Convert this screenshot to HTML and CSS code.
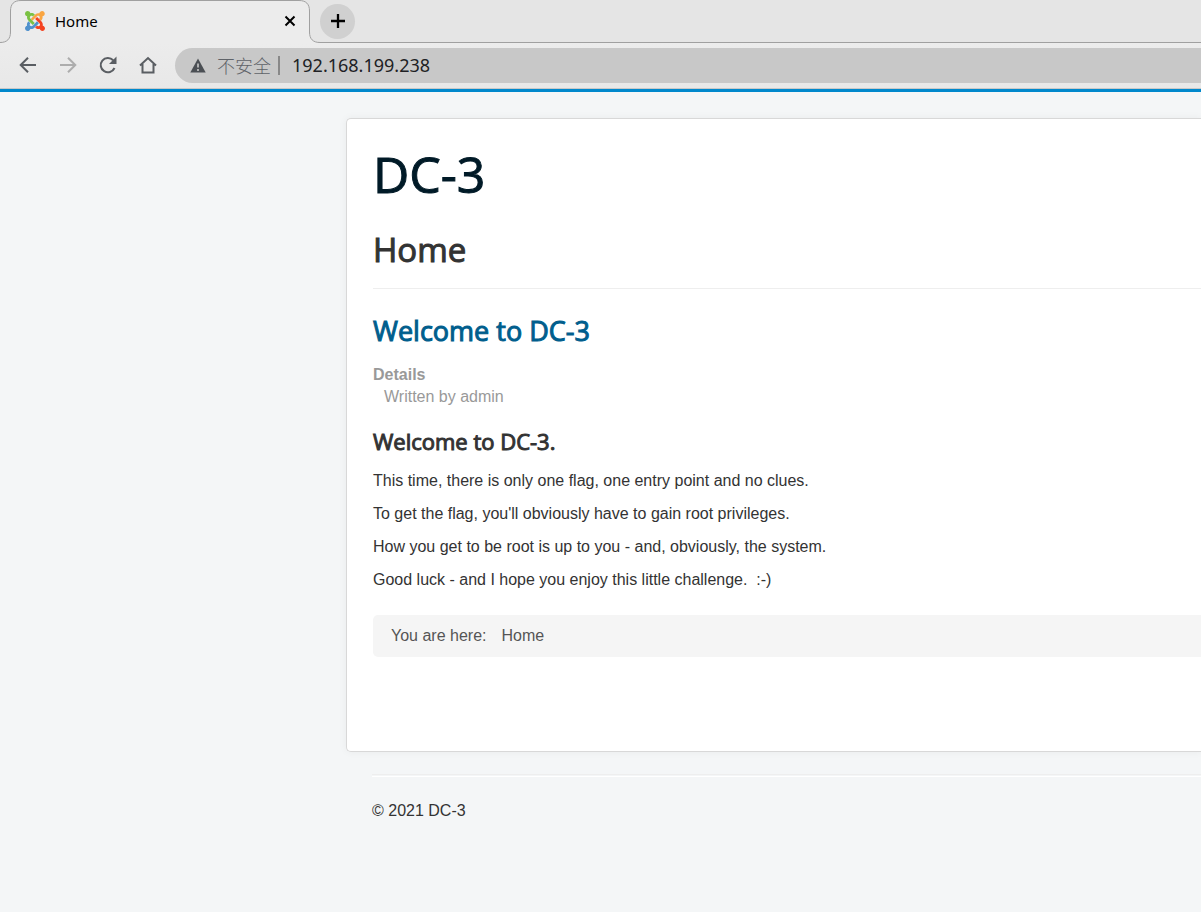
FILE: index.html
```html
<!DOCTYPE html>
<html lang="en">
<head>
<meta charset="utf-8">
<title>Home</title>
<link rel="stylesheet" href="styles.css">
</head>
<body>
<div class="browser">
  <div class="tab-strip">
    <div class="tab">
      <svg class="tab-shape" width="320" height="43" viewBox="0 0 320 43" aria-hidden="true">
        <path fill="#ececec" d="M0 43V42.500C7 42.500 10.500 39 10.500 32V11C10.500 4 14 .5 21 .5H299C306 .5 309.500 4 309.500 11V32C309.500 39 313 42.500 320 42.500V43z"/>
        <path fill="none" stroke="#a0a0a0" d="M0 42.500C7 42.500 10.500 39 10.500 32V11C10.500 4 14 .5 21 .5H299C306 .5 309.500 4 309.500 11V32C309.500 39 313 42.500 320 42.500"/>
      </svg>
      <svg class="favicon" viewBox="0 0 24 24" aria-hidden="true">
        <path fill="#5091cd" d="M16.719 14.759L14.220 17.260l-2.370 2.370-.462.466c-1.368 1.365-3.297 1.830-5.047 1.397-.327 1.424-1.604 2.490-3.130 2.490C1.438 23.983 0 22.547 0 20.772c0-1.518 1.055-2.789 2.469-3.123-.446-1.760.016-3.705 1.396-5.080l.179-.180 2.370 2.370-.184.181c-.769.779-.769 2.024 0 2.789.771.780 2.022.780 2.787 0l.465-.465 2.367-2.371 2.502-2.506z"/>
        <path fill="#f9a541" d="M6.975 9.461L9.470 6.960l2.370-2.370.462-.465c1.365-1.366 3.286-1.845 5.025-1.412C17.572 1.158 18.911 0 20.516 0c1.770.009 3.210 1.446 3.210 3.215 0 1.631-1.209 2.976-2.775 3.186.432 1.749-.045 3.675-1.413 5.040l-.180.180-2.370-2.370.180-.180c.771-.765.771-2.010 0-2.775-.770-.770-2.020-.770-2.787 0l-.465.465-2.367 2.370-2.502 2.500z"/>
        <path fill="#f44321" d="M17.643 21.411c-1.822.563-3.885.120-5.328-1.318l-.180-.185 2.365-2.369.180.184c.771.768 2.018.768 2.787 0 .765-.765.769-2.010-.004-2.781l-.466-.465-2.365-2.370-2.502-2.503 2.370-2.369 2.499 2.505 2.367 2.370.464.464c1.365 1.360 1.846 3.278 1.411 5.021 1.560.224 2.759 1.560 2.759 3.180 0 1.784-1.439 3.210-3.209 3.210-1.545 0-2.851-1.096-3.135-2.565z"/>
        <path fill="#7ac143" d="M6.400 2.600c1.800-.5 3.800 0 5.200 1.400l.2.2-2.400 2.300-.2-.2c-.770-.770-2.020-.770-2.787 0-.770.770-.770 2.010 0 2.780l.470.470 2.360 2.370 2.500 2.500-2.370 2.370-2.500-2.500-2.360-2.370-.460-.470C2.600 9.900 2.130 7.900 2.600 6.300 1.200 6 0 4.800 0 3.200 0 1.440 1.440 0 3.210 0 4.700 0 6.100 1.100 6.400 2.600z"/>
      </svg>
      <span class="tab-title">Home</span>
      <button class="tab-close" type="button" aria-label="Close tab">
        <svg viewBox="0 0 12 12" width="12" height="12"><path d="M1.500 1.500l9 9M10.500 1.500l-9 9" stroke="#000" stroke-width="2"/></svg>
      </button>
    </div>
    <button class="new-tab" type="button" aria-label="New tab">
      <svg viewBox="0 0 16 16" width="16" height="16"><path d="M8 1v14M1 8h14" stroke="#000" stroke-width="2.300"/></svg>
    </button>
  </div>
  <div class="toolbar">
    <button class="tool" type="button" aria-label="Back">
      <svg viewBox="0 0 20 20"><path d="M18 10H3M10 2.700L2.700 10l7.300 7.300"/></svg>
    </button>
    <button class="tool tool-off" type="button" aria-label="Forward">
      <svg viewBox="0 0 20 20"><path d="M2 10h15M10 2.700l7.300 7.300-7.300 7.300"/></svg>
    </button>
    <button class="tool" type="button" aria-label="Reload">
      <svg viewBox="0 0 20 20"><path d="M16.500 13A7.200 7.200 0 1 1 15.200 5.200"/><path class="solid" d="M18.500 1.500v7.500h-7.500z"/></svg>
    </button>
    <button class="tool" type="button" aria-label="Home page">
      <svg viewBox="0 0 20 20"><path d="M2 10.500L10 3l8 7.500M4.500 9v8.500h11V9"/></svg>
    </button>
    <div class="address">
      <svg class="warning" viewBox="0 0 16 15" aria-hidden="true"><path d="M8 .5L15.700 14.500H.3z" fill="#4b4f54"/><path d="M8 5.500v4M8 11v2" stroke="#c8c8c8" stroke-width="1.600"/></svg>
      <label class="security" for="url" lang="zh">不安全</label>
      <span class="divider"></span>
      <input class="url" id="url" type="text" value="192.168.199.238">
    </div>
  </div>
</div>
<div class="site">
  <main class="card">
    <a class="brand" href="#">DC-3</a>
    <h1 class="page-title">Home</h1>
    <article>
      <h2 class="article-title"><a href="#">Welcome to DC-3</a></h2>
      <dl class="details">
        <dt>Details</dt>
        <dd>Written by admin</dd>
      </dl>
      <h3 class="lead">Welcome to DC-3.</h3>
      <p>This time, there is only one flag, one entry point and no clues.</p>
      <p>To get the flag, you'll obviously have to gain root privileges.</p>
      <p>How you get to be root is up to you - and, obviously, the system.</p>
      <p>Good luck - and I hope you enjoy this little challenge.&nbsp; :-)</p>
    </article>
    <nav class="breadcrumb"><span>You are here:</span><span>Home</span></nav>
  </main>
  <footer class="footer">
    <hr class="rule">
    <p>© 2021 DC-3</p>
  </footer>
</div>
</body>
</html>
```
FILE: styles.css
```css
* { box-sizing: border-box; }
body {
  margin: 0;
  min-height: 100vh;
  background: #f4f6f7;
  color: #333;
  font: 16px/22px "Liberation Sans", Arial, sans-serif;
}
button { margin: 0; padding: 0; border: 0; background: none; }
svg { display: block; }

.browser {
  background: linear-gradient(#ececec 43px, #e8e8e8);
  border-bottom: 1px solid #c8c8c8;
}
.tab-strip {
  display: flex;
  align-items: center;
  height: 43px;
  background: #e5e5e5;
  border-bottom: 1px solid #a0a0a0;
}
.tab {
  position: relative;
  display: flex;
  align-items: center;
  width: 320px;
  height: 42px;
  padding: 0 24px 0 25px;
  font: 15px/22px "Noto Sans", sans-serif;
  color: #000;
}
.tab-shape { position: absolute; left: 0; top: 0; z-index: 0; }
.favicon, .tab-title, .tab-close { position: relative; }
.favicon { width: 20px; height: 20px; margin-right: 10px; }
.tab-title { flex: 1; }
.new-tab {
  display: grid;
  place-items: center;
  width: 35px;
  height: 35px;
  border-radius: 50%;
  background: #d0d0d0;
}
.toolbar { display: flex; align-items: center; height: 45px; padding: 0 0 1px 18px; }
.tool { width: 20px; margin-right: 20px; }
.tool svg { width: 20px; height: 20px; fill: none; stroke: #5a5e63; stroke-width: 2; }
.tool-off svg { stroke: #adadad; }
.tool .solid { fill: #5a5e63; stroke: none; }
.address {
  display: flex;
  flex: 1;
  align-items: center;
  height: 35px;
  margin-left: -3px;
  padding-left: 15px;
  border-radius: 18px 0 0 18px;
  background: #c8c8c8;
}
.warning { width: 16px; height: 15px; margin-right: 11px; }
.security { font: 300 18px/24px "Noto Sans CJK SC", sans-serif; color: #5f6368; }
.divider { width: 2px; height: 19px; margin: 0 12px 0 7px; background: #888; }
.url {
  flex: 1;
  min-width: 0;
  padding: 0;
  border: 0;
  background: none;
  color: #202124;
  font: 18px/24px "Noto Sans", sans-serif;
}

.site {
  padding: 26px 0 0 346px;
  border-top: 3px solid #08c;
}
.card {
  padding: 25px 0 94px 26px;
  border: 1px solid #d8d8d8;
  border-right: 0;
  border-radius: 5px 0 0 5px;
  background: #fff;
  box-shadow: 0 0 8px rgba(0, 0, 0, .05);
}
.brand, .page-title, .article-title, .lead {
  display: block;
  font-family: "Open Sans", sans-serif;
  font-weight: 400;
  -webkit-text-stroke: 1px currentColor;
}
.brand { font-size: 50px; line-height: 60px; color: #001a27; text-decoration: none; }
.page-title {
  margin: 22px 0 21px;
  padding-bottom: 14px;
  border-bottom: 1px solid #eee;
  font-size: 33px;
  line-height: 48px;
}
.article-title { margin: 0 0 12px; font-size: 27px; line-height: 42px; color: #005e8d; }
.article-title a { color: inherit; text-decoration: none; }
.details { margin: 0 0 18px; color: #999; }
.details dt { font-weight: bold; }
.details dd { margin: 0 0 0 11px; }
.lead { margin: 0 0 14px; font-size: 22px; line-height: 30px; }
article p { margin: 0 0 11px; }
.breadcrumb {
  display: flex;
  gap: 15px;
  margin-top: 24px;
  padding: 10px 18px;
  border-radius: 5px 0 0 5px;
  background: #f5f5f5;
  color: #555;
}
.footer { padding-left: 26px; }
.rule {
  margin: 22px 0 23px;
  border: solid #eee;
  border-width: 1px 0;
  border-bottom-color: #fff;
  height: 3px;
}
.footer p { margin: 0; }
```
